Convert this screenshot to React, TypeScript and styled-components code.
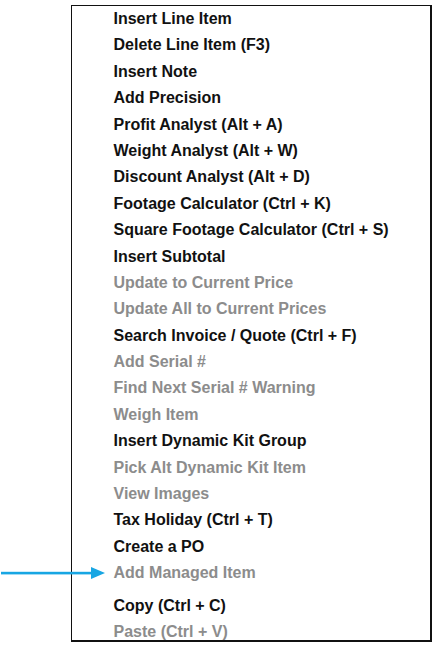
import styled, { createGlobalStyle } from "styled-components";

const GlobalStyle = createGlobalStyle`
  html, body {
    margin: 0;
    padding: 0;
    background: #ffffff;
  }
  body {
    font-family: "Liberation Sans", Arial, sans-serif;
  }
`;

interface MenuEntry {
  label: string;
  disabled?: boolean;
}

const topItems: MenuEntry[] = [
  { label: "Insert Line Item" },
  { label: "Delete Line Item (F3)" },
  { label: "Insert Note" },
  { label: "Add Precision" },
  { label: "Profit Analyst (Alt + A)" },
  { label: "Weight Analyst (Alt + W)" },
  { label: "Discount Analyst (Alt + D)" },
  { label: "Footage Calculator (Ctrl + K)" },
  { label: "Square Footage Calculator (Ctrl + S)" },
  { label: "Insert Subtotal" },
  { label: "Update to Current Price", disabled: true },
  { label: "Update All to Current Prices", disabled: true },
  { label: "Search Invoice / Quote (Ctrl + F)" },
  { label: "Add Serial #", disabled: true },
  { label: "Find Next Serial # Warning", disabled: true },
  { label: "Weigh Item", disabled: true },
  { label: "Insert Dynamic Kit Group" },
  { label: "Pick Alt Dynamic Kit Item", disabled: true },
  { label: "View Images", disabled: true },
  { label: "Tax Holiday (Ctrl + T)" },
  { label: "Create a PO" },
  { label: "Add Managed Item", disabled: true },
];

const bottomItems: MenuEntry[] = [
  { label: "Copy (Ctrl + C)" },
  { label: "Paste (Ctrl + V)", disabled: true },
];

const App = () => {
  return (
    <>
      <GlobalStyle />
      <Page>
        <Menu>
          <ItemList>
            {topItems.map((item) => (
              <Item key={item.label} disabled={item.disabled}>
                {item.label}
                {item.label === "Add Managed Item" && (
                  <Pointer width="106" height="14" viewBox="0 0 106 14">
                    <rect x="0" y="5.8" width="92" height="2.6" fill="#18a6e3" />
                    <polygon points="90,1 104,7 90,13" fill="#18a6e3" />
                  </Pointer>
                )}
              </Item>
            ))}
          </ItemList>
          <Divider />
          <ItemList>
            {bottomItems.map((item) => (
              <Item key={item.label} disabled={item.disabled}>
                {item.label}
              </Item>
            ))}
          </ItemList>
        </Menu>
      </Page>
    </>
  );
};

const Page = styled.div`
  width: 437px;
  height: 648px;
  padding: 5px 0 0 71px;
  box-sizing: border-box;
  overflow: hidden;
`;

const Menu = styled.div`
  width: 361px;
  height: 637px;
  box-sizing: border-box;
  border: 1px solid #111111;
  border-right-width: 2px;
  border-bottom-width: 2px;
  background: #ffffff;
  display: flex;
  flex-direction: column;
`;

const ItemList = styled.ul`
  list-style: none;
  margin: 0;
  padding: 0;
  display: flex;
  flex-direction: column;
`;

interface IItem {
  disabled?: boolean;
}

const Item = styled.li<IItem>`
  position: relative;
  height: 26.4px;
  line-height: 26.4px;
  padding-left: 41.5px;
  font-size: 16px;
  font-weight: 700;
  color: ${(props) => (props.disabled ? "#8c8c8c" : "#111111")};
  white-space: nowrap;
`;

const Pointer = styled.svg`
  position: absolute;
  left: -71px;
  top: 6px;
`;

const Divider = styled.div`
  height: 1px;
  margin: 3px 0 3px 36px;
  background: #c4c4c4;
`;

export default App;
